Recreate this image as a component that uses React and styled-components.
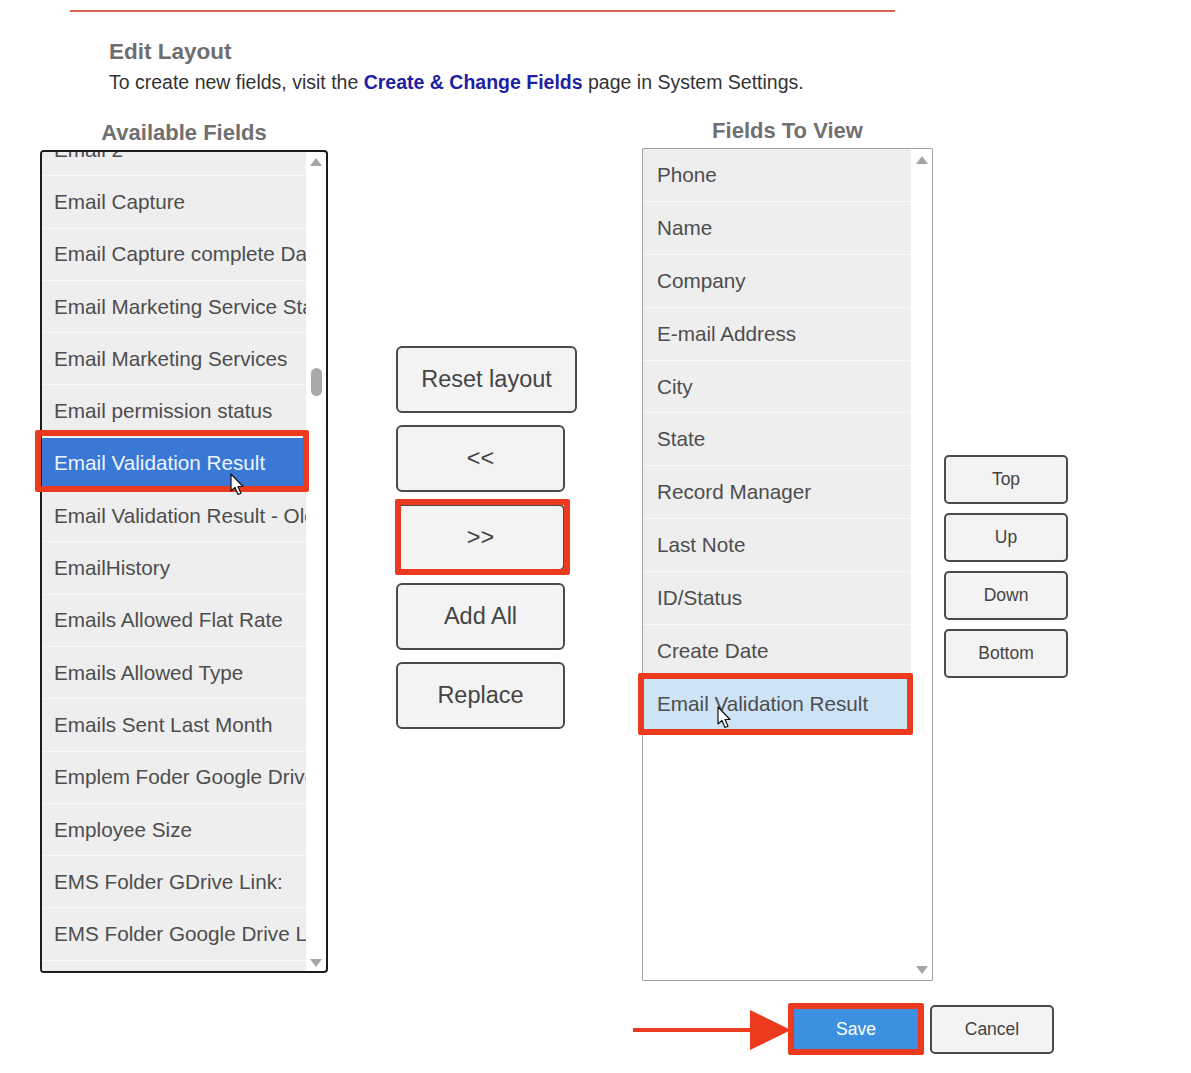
import React, { useLayoutEffect, useRef } from 'react';
import styled, { createGlobalStyle } from 'styled-components';

const Global = createGlobalStyle`
  html, body { margin: 0; padding: 0; background: #fff; }
  body { font-family: "Liberation Sans", Arial, sans-serif; }
  * { box-sizing: border-box; }
`;

const Page = styled.div`
  width: 1191px;
  height: 1073px;
  padding-top: 10px;
  overflow: hidden;
`;

const TopRule = styled.div`
  margin-left: 70px;
  width: 825px;
  height: 2px;
  background: #d9654d;
`;

const Header = styled.header`
  padding-left: 109px;
  margin-top: 27px;
`;

const Title = styled.h1`
  margin: 0;
  font-size: 22.5px;
  line-height: 26px;
  font-weight: bold;
  color: #6e6e6e;
`;

const Desc = styled.p`
  margin: 6px 0 0;
  font-size: 19.5px;
  line-height: 22px;
  color: #333;
`;

const Link = styled.a`
  color: #1f1fa3;
  font-weight: bold;
  text-decoration: none;
`;

const Columns = styled.div`
  display: flex;
  align-items: flex-start;
  padding-left: 40px;
  margin-top: 28px;
`;

const ListCol = styled.section`
  width: ${(p) => p.$w}px;
  margin-left: ${(p) => p.$ml || 0}px;
  margin-top: ${(p) => p.$mt || 0}px;
  display: flex;
  flex-direction: column;
  align-items: center;
`;

const ColTitle = styled.h2`
  margin: 0;
  font-size: 22px;
  line-height: 24px;
  font-weight: bold;
  color: #707070;
`;

const ListWrap = styled.div`
  position: relative;
  align-self: stretch;
  margin-top: ${(p) => p.$mt}px;
`;

const Listbox = styled.div`
  display: flex;
  height: ${(p) => p.$h}px;
  border: ${(p) => (p.$strong ? '2px solid #1c1c1c' : '1px solid #a3a3a3')};
  border-radius: ${(p) => (p.$strong ? '4px' : '1px')};
  background: #fff;
  overflow: hidden;
`;

const Rows = styled.ul`
  flex: 1;
  min-width: 0;
  margin: 0;
  padding: 0;
  list-style: none;
  overflow: hidden;
`;

const Row = styled.li`
  height: ${(p) => p.$h}px;
  padding-left: ${(p) => p.$pad}px;
  display: flex;
  align-items: center;
  white-space: nowrap;
  overflow: hidden;
  font-size: 20.7px;
  color: ${(p) => (p.$sel === 'strong' ? '#eef4ff' : '#4d4d4d')};
  background: ${(p) =>
    p.$sel === 'strong' ? '#3a78d6' : p.$sel === 'soft' ? '#cde4f7' : '#eeeeee'};
  border-bottom: 1px solid #f8f8f8;
`;

const Scrollbar = styled.div`
  width: ${(p) => p.$w}px;
  flex: none;
  display: flex;
  flex-direction: column;
  align-items: center;
  padding-top: ${(p) => p.$top}px;
  padding-bottom: ${(p) => p.$bottom}px;
`;

const ArrowUp = styled.div`
  width: 0;
  height: 0;
  border-left: 6px solid transparent;
  border-right: 6px solid transparent;
  border-bottom: 8px solid #a6a6a6;
`;

const ArrowDown = styled.div`
  margin-top: auto;
  width: 0;
  height: 0;
  border-left: 6px solid transparent;
  border-right: 6px solid transparent;
  border-top: 8px solid #a6a6a6;
`;

const Thumb = styled.div`
  width: 11px;
  height: 28px;
  border-radius: 6px;
  background: #a8a8a8;
`;

const Callout = styled.div`
  position: absolute;
  border: 6px solid #ec3a1f;
  border-radius: 2px;
  pointer-events: none;
`;

const Pointer = styled.svg`
  position: absolute;
  pointer-events: none;
`;

const MidCol = styled.div`
  margin-left: 68px;
  margin-top: 225px;
  display: flex;
  flex-direction: column;
  align-items: flex-start;
  gap: 12px;
`;

const SideCol = styled.div`
  margin-left: 11px;
  margin-top: 334px;
  display: flex;
  flex-direction: column;
  gap: 9px;
`;

const Slot = styled.div`
  position: relative;
`;

const Btn = styled.button`
  font-family: "Liberation Sans", Arial, sans-serif;
  font-size: ${(p) => (p.$small ? 17.5 : 23.5)}px;
  width: ${(p) => p.$w}px;
  height: ${(p) => (p.$small ? 49 : 67)}px;
  color: ${(p) => (p.$primary ? '#ffffff' : '#444')};
  background: ${(p) => (p.$primary ? '#3d8fe0' : '#f3f3f3')};
  border: 2px solid ${(p) => (p.$primary ? '#3d8fe0' : '#4a4a4a')};
  border-radius: ${(p) => (p.$small ? 5 : 6)}px;
  padding: 0;
  cursor: pointer;
`;

const Footer = styled.div`
  display: flex;
  align-items: center;
  padding-left: 633px;
  margin-top: 24px;
`;

const FooterBtns = styled.div`
  display: flex;
  gap: 12px;
`;

const available = [
  'Email 2',
  'Email Capture',
  'Email Capture complete Date',
  'Email Marketing Service Status',
  'Email Marketing Services',
  'Email permission status',
  'Email Validation Result',
  'Email Validation Result - Old',
  'EmailHistory',
  'Emails Allowed Flat Rate',
  'Emails Allowed Type',
  'Emails Sent Last Month',
  'Emplem Foder Google Drive',
  'Employee Size',
  'EMS Folder GDrive Link:',
  'EMS Folder Google Drive Link',
  'EMS Folder ID',
  'EMS Status',
];

const toView = [
  'Phone',
  'Name',
  'Company',
  'E-mail Address',
  'City',
  'State',
  'Record Manager',
  'Last Note',
  'ID/Status',
  'Create Date',
  'Email Validation Result',
];

const LEFT_ROW = 52.3;
const RIGHT_ROW = 52.9;
const LEFT_SCROLL = 28.3;
const LEFT_SEL = 6;
const RIGHT_SEL = 10;

function Cursor({ x, y }) {
  return (
    <Pointer width="16" height="24" viewBox="0 0 16 24" style={{ left: x, top: y }}>
      <path
        d="M1 1 L1 18 L5 14.5 L8 21.5 L11 20.2 L8 13.5 L13 13.5 Z"
        fill="#fff"
        stroke="#111"
        strokeWidth="1.2"
        strokeLinejoin="round"
      />
    </Pointer>
  );
}

export default function App() {
  const leftRef = useRef(null);
  useLayoutEffect(() => {
    if (leftRef.current) leftRef.current.scrollTop = LEFT_SCROLL;
  }, []);

  const leftSelTop = 2 + LEFT_SEL * LEFT_ROW - LEFT_SCROLL;
  const rightSelTop = 1 + RIGHT_SEL * RIGHT_ROW;

  return (
    <Page>
      <Global />
      <TopRule />
      <Header>
        <Title>Edit Layout</Title>
        <Desc>
          To create new fields, visit the <Link href="#">Create &amp; Change Fields</Link> page in
          System Settings.
        </Desc>
      </Header>

      <Columns>
        <ListCol $w={288}>
          <ColTitle>Available Fields</ColTitle>
          <ListWrap $mt={5}>
            <Listbox $h={823} $strong>
              <Rows ref={leftRef}>
                {available.map((f, i) => (
                  <Row key={f} $h={LEFT_ROW} $pad={12} $sel={i === LEFT_SEL ? 'strong' : undefined}>
                    {f}
                  </Row>
                ))}
              </Rows>
              <Scrollbar $w={20} $top={6} $bottom={4}>
                <ArrowUp />
                <Thumb style={{ marginTop: 202 }} />
                <ArrowDown />
              </Scrollbar>
            </Listbox>
            <Callout
              style={{ left: -5, top: leftSelTop - 7.5, width: 274, height: 62 }}
            />
            <Cursor x={190} y={323} />
          </ListWrap>
        </ListCol>

        <MidCol>
          <Btn $w={181}>Reset layout</Btn>
          <Btn $w={169}>&lt;&lt;</Btn>
          <Slot>
            <Btn $w={169}>&gt;&gt;</Btn>
            <Callout style={{ left: -1, top: -5, width: 175, height: 76 }} />
          </Slot>
          <Btn $w={169}>Add All</Btn>
          <Btn $w={169}>Replace</Btn>
        </MidCol>

        <ListCol $w={291} $ml={65} $mt={-2}>
          <ColTitle>Fields To View</ColTitle>
          <ListWrap $mt={5}>
            <Listbox $h={833}>
              <Rows>
                {toView.map((f, i) => (
                  <Row key={f} $h={RIGHT_ROW} $pad={14} $sel={i === RIGHT_SEL ? 'soft' : undefined}>
                    {f}
                  </Row>
                ))}
              </Rows>
              <Scrollbar $w={21} $top={7} $bottom={6}>
                <ArrowUp />
                <ArrowDown />
              </Scrollbar>
            </Listbox>
            <Callout
              style={{ left: -4, top: rightSelTop - 5, width: 275, height: 62 }}
            />
            <Cursor x={75} y={558} />
          </ListWrap>
        </ListCol>

        <SideCol>
          <Btn $small $w={124}>Top</Btn>
          <Btn $small $w={124}>Up</Btn>
          <Btn $small $w={124}>Down</Btn>
          <Btn $small $w={124}>Bottom</Btn>
        </SideCol>
      </Columns>

      <Footer>
        <svg width="161" height="44" viewBox="0 0 161 44">
          <line x1="0" y1="22" x2="120" y2="22" stroke="#ec3a1f" strokeWidth="4" />
          <polygon points="117,2 158,22 117,42" fill="#ec3a1f" />
        </svg>
        <FooterBtns>
          <Slot>
            <Btn $small $primary $w={124}>Save</Btn>
            <Callout style={{ left: -6, top: -2, width: 136, height: 52 }} />
          </Slot>
          <Btn $small $w={124}>Cancel</Btn>
        </FooterBtns>
      </Footer>
    </Page>
  );
}
